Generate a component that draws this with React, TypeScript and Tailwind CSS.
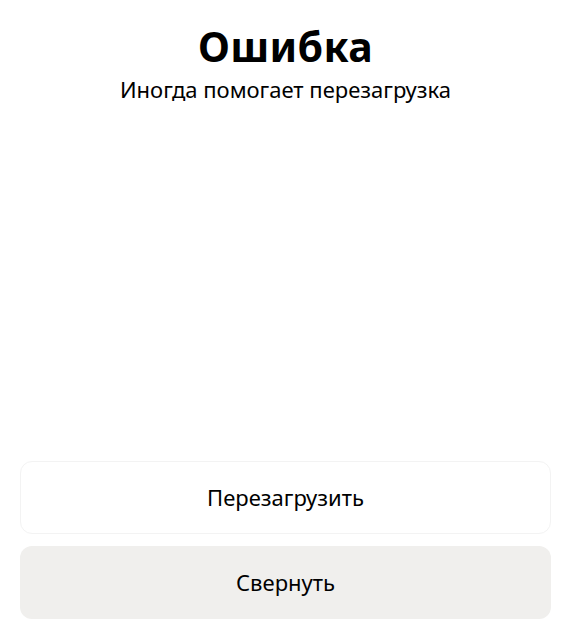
export default function App() {
  return (
    <div
      className="w-[571px] h-[632px] bg-white flex flex-col text-black"
      style={{ fontFamily: '"Noto Sans", Inter, sans-serif' }}
    >
      <div className="flex flex-col items-center pt-[19px]">
        <h1 className="text-[41px] leading-[54px] font-bold tracking-[0.3px]">Ошибка</h1>
        <p className="text-[22px] leading-[28px] mt-[2px]">Иногда помогает перезагрузка</p>
      </div>
      <div className="flex-1" />
      <div className="flex flex-col gap-3 px-5 pb-[13px]">
        <button className="h-[73px] rounded-xl bg-white border border-[#f3f3f3] text-[22px]">
          Перезагрузить
        </button>
        <button className="h-[73px] rounded-xl bg-[#f0efed] text-[22px]">
          Свернуть
        </button>
      </div>
    </div>
  );
}
